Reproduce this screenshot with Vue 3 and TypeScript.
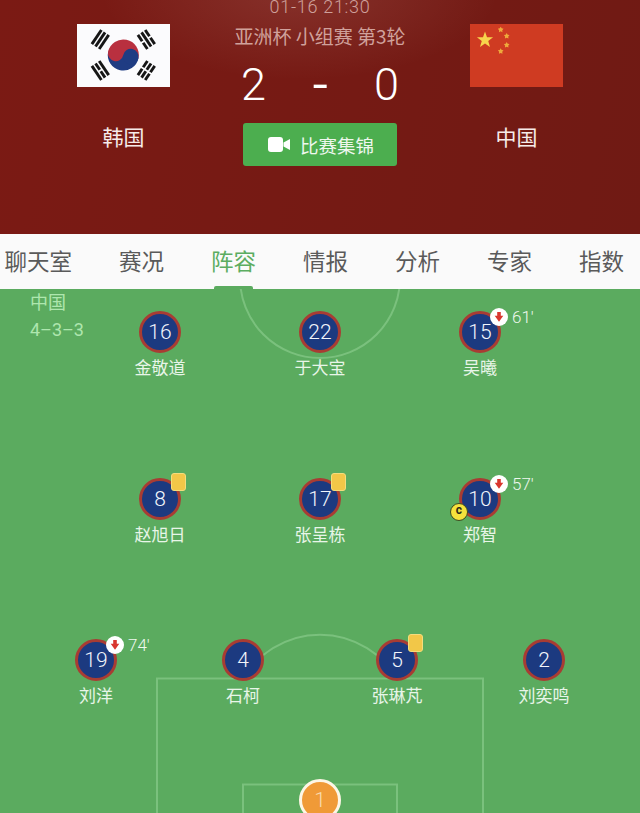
<template>
  <div class="page">
    <header class="match">
      <div class="team">
        <svg class="flag" viewBox="0 0 93 63" aria-label="韩国">
          <rect width="93" height="63" fill="#fbfbfd" />
          <g v-for="t in trigrams" :key="t.rot" :transform="`translate(46.3 31) rotate(${t.rot}) translate(0 -28)`">
            <template v-for="(bar, i) in t.bars" :key="i">
              <template v-if="bar">
                <rect x="-8.5" :y="i * 4.4 - 5.6" width="17" height="2.9" fill="#161616" />
              </template>
              <template v-else>
                <rect x="-8.5" :y="i * 4.4 - 5.6" width="7.6" height="2.9" fill="#161616" />
                <rect x="0.9" :y="i * 4.4 - 5.6" width="7.6" height="2.9" fill="#161616" />
              </template>
            </template>
          </g>
          <g transform="translate(46.3 31) rotate(12)">
            <path d="M-15.5 0a15.5 15.5 0 0 1 31 0z" fill="#b9303f" />
            <path d="M-15.5 0a15.5 15.5 0 0 0 31 0z" fill="#1f3c83" />
            <circle cx="-7.75" cy="0" r="7.75" fill="#b9303f" />
            <circle cx="7.75" cy="0" r="7.75" fill="#1f3c83" />
          </g>
        </svg>
        <span class="team-name">韩国</span>
      </div>

      <div class="info">
        <div class="time">01-16 21:30</div>
        <div class="round">亚洲杯 小组赛 第3轮</div>
        <div class="score">
          <span>2</span>
          <span class="dash">-</span>
          <span>0</span>
        </div>
        <button type="button" class="replay">
          <svg class="cam" viewBox="0 0 22 15">
            <rect width="15" height="15" rx="3" fill="#fff" />
            <path d="M15.500 5.600 22 2v11l-6.500-3.600z" fill="#fff" />
          </svg>
          比赛集锦
        </button>
      </div>

      <div class="team">
        <svg class="flag" viewBox="0 0 93 63" aria-label="中国">
          <rect width="93" height="63" fill="#cf3b22" />
          <polygon :points="star(15, 16, 8.5, 0.4)" fill="#f7d44c" />
          <polygon v-for="s in smallStars" :key="s[1]" :points="star(s[0], s[1], 3, 0.55)" fill="#eeaa3c" />
        </svg>
        <span class="team-name">中国</span>
      </div>
    </header>

    <nav class="tabs">
      <span v-for="t in tabs" :key="t" class="tab" :class="{ active: t === '阵容' }">{{ t }}</span>
    </nav>

    <section class="pitch">
      <svg class="lines" viewBox="0 0 640 524" fill="none">
        <circle cx="320" cy="-11" r="80" />
        <path d="M157 524V389.500H483V524" />
        <path d="M243.300 389.500A89 89 0 0 1 396.700 389.500" />
        <path d="M243 524V495.500H397V524" />
      </svg>

      <div class="formation">
        <div>中国</div>
        <div>4–3–3</div>
      </div>

      <div v-for="(row, r) in rows" :key="r" class="row" :class="`row-${r}`">
        <div v-for="p in row" :key="p.num" class="player">
          <div class="shirt" :class="{ keeper: p.keeper }">
            {{ p.num }}
            <span v-if="p.card" class="card" />
            <span v-if="p.captain" class="captain">c</span>
            <span v-if="p.off" class="sub">
              <svg viewBox="-9 -9 18 18" class="sub-arrow">
                <path d="M-1.800-5H1.800V-1.200H4.300L0 4.800-4.300-1.200H-1.800Z" fill="#d9362f" />
              </svg>
              <span class="sub-time">{{ p.off }}'</span>
            </span>
          </div>
          <div v-if="p.name" class="name">{{ p.name }}</div>
        </div>
      </div>
    </section>
  </div>
</template>

<script setup lang="ts">
interface Player {
  num: number;
  name?: string;
  card?: boolean;
  captain?: boolean;
  off?: number;
  keeper?: boolean;
}

const tabs = ['聊天室', '赛况', '阵容', '情报', '分析', '专家', '指数'];

const rows: Player[][] = [
  [
    { num: 16, name: '金敬道' },
    { num: 22, name: '于大宝' },
    { num: 15, name: '吴曦', off: 61 },
  ],
  [
    { num: 8, name: '赵旭日', card: true },
    { num: 17, name: '张呈栋', card: true },
    { num: 10, name: '郑智', off: 57, captain: true },
  ],
  [
    { num: 19, name: '刘洋', off: 74 },
    { num: 4, name: '石柯' },
    { num: 5, name: '张琳芃', card: true },
    { num: 2, name: '刘奕鸣' },
  ],
  [{ num: 1, keeper: true }],
];

// rotation around the badge, true = solid bar
const trigrams = [
  { rot: -56, bars: [true, true, true] },
  { rot: 56, bars: [false, true, false] },
  { rot: -124, bars: [true, false, true] },
  { rot: 124, bars: [false, false, false] },
];

const smallStars: [number, number][] = [
  [30.7, 5.7],
  [36.7, 12],
  [36.7, 21],
  [30.7, 27.3],
];

function star(cx: number, cy: number, r: number, inner: number): string {
  const pts: string[] = [];
  for (let i = 0; i < 10; i++) {
    const radius = i % 2 ? r * inner : r;
    const a = (Math.PI / 5) * i - Math.PI / 2;
    pts.push(`${(cx + radius * Math.cos(a)).toFixed(2)},${(cy + radius * Math.sin(a)).toFixed(2)}`);
  }
  return pts.join(' ');
}
</script>

<style>
html,
body {
  margin: 0;
  background: #5bab5f;
  overflow: hidden;
}
</style>

<style scoped>
.page {
  width: 640px;
  height: 813px;
  overflow: hidden;
  font-family: 'Noto Sans CJK SC', 'Noto Sans', sans-serif;
}

.match {
  height: 234px;
  box-sizing: border-box;
  display: grid;
  grid-template-columns: 93px 300px 93px;
  justify-content: center;
  overflow: hidden;
  color: #fff;
  background:
    radial-gradient(ellipse 200px 90px at 300px -10px, rgba(255, 220, 210, 0.12), transparent),
    linear-gradient(100deg, #7b1a14, #701a14);
}

.team {
  display: flex;
  flex-direction: column;
  align-items: center;
  padding-top: 24px;
}

.flag {
  width: 93px;
  height: 63px;
  flex: none;
}

.team-name {
  margin-top: 34px;
  font-size: 21px;
  line-height: 30px;
  color: #f6ecea;
}

.info {
  display: flex;
  flex-direction: column;
  align-items: center;
}

.time {
  margin-top: -5px;
  font: 300 18px/24px Roboto, sans-serif;
  letter-spacing: 0.7px;
  color: #cfa09b;
}

.round {
  margin-top: 4px;
  font-size: 19px;
  line-height: 26px;
  color: #d0a19c;
}

.score {
  display: flex;
  margin-top: 10px;
  font: 300 45px/52px Roboto, sans-serif;
}

.score span {
  width: 66.500px;
  text-align: center;
}

.score .dash {
  font-weight: 400;
  transform: scaleX(1.2);
}

.replay {
  display: flex;
  align-items: center;
  justify-content: center;
  gap: 10px;
  width: 154px;
  height: 43px;
  margin-top: 12px;
  padding: 0 0 0 2px;
  border: none;
  border-radius: 3px;
  background: #4cae4f;
  color: #eef7ee;
  font: inherit;
  font-size: 18.500px;
}

.cam {
  width: 22px;
  height: 15px;
}

.tabs {
  height: 55px;
  box-sizing: border-box;
  display: flex;
  gap: 47px;
  padding: 10px 0 0 4.500px;
  background: #fafafa;
  color: #5a5a5a;
  font-size: 22.500px;
  line-height: 32px;
  white-space: nowrap;
}

.tab {
  position: relative;
}

.tab.active {
  color: #5cad61;
}

.tab.active::after {
  content: '';
  position: absolute;
  left: 3px;
  right: 3px;
  bottom: 0;
  height: 3px;
  border-radius: 2px 2px 0 0;
  background: #5bab5f;
}

.pitch {
  position: relative;
  height: 524px;
  box-sizing: border-box;
  padding-top: 22px;
  background: #5bab5f;
  display: grid;
  grid-template-rows: 167px 161px 140px auto;
}

.lines {
  position: absolute;
  inset: 0;
  width: 640px;
  height: 524px;
  stroke: rgba(190, 240, 190, 0.32);
  stroke-width: 2;
}

.formation {
  position: absolute;
  left: 30px;
  top: 0;
  font: 18px/27px Roboto, 'Noto Sans CJK SC', sans-serif;
  color: #aee6ae;
}

.row {
  position: relative;
  display: flex;
  justify-content: center;
}

.player {
  width: 160px;
  display: flex;
  flex-direction: column;
  align-items: center;
}

.row-2 {
  justify-content: flex-start;
  padding-left: 46px;
  gap: 47px;
}

.row-2 .player {
  width: 100px;
}

.row-2 .player:nth-child(3) {
  margin-left: 7px;
}

.shirt {
  position: relative;
  box-sizing: border-box;
  width: 42px;
  height: 42px;
  border: 3px solid #a83c33;
  border-radius: 50%;
  background: #1c3a80;
  color: #f2f5fb;
  display: flex;
  align-items: center;
  justify-content: center;
  font: 300 21px/1 Roboto, sans-serif;
}

.shirt.keeper {
  border-color: #fdf6e6;
  background: #f09a37;
  color: #f9dcb0;
}

.name {
  margin-top: 1.500px;
  font-size: 17px;
  line-height: 24px;
  color: #e8f5e8;
}

.card {
  position: absolute;
  left: 29px;
  top: -8px;
  box-sizing: border-box;
  width: 15px;
  height: 18px;
  border-radius: 3px;
  border: 1px solid #f5dc7c;
  background: #f2c748;
}

.captain {
  position: absolute;
  left: -12px;
  top: 22px;
  box-sizing: border-box;
  width: 18px;
  height: 18px;
  border-radius: 50%;
  border: 1.500px solid #3c4a20;
  background: #f5e23c;
  color: #2a2a1a;
  font: 700 12px/13px Roboto, sans-serif;
  text-align: center;
}

.sub {
  position: absolute;
  left: 28px;
  top: -6px;
  display: flex;
  align-items: center;
  gap: 4px;
}

.sub-arrow {
  width: 18px;
  height: 18px;
  flex: none;
  border-radius: 50%;
  background: #fff;
}

.sub-time {
  font-size: 17px;
  font-weight: 300;
  color: #eef8ee;
}
</style>
